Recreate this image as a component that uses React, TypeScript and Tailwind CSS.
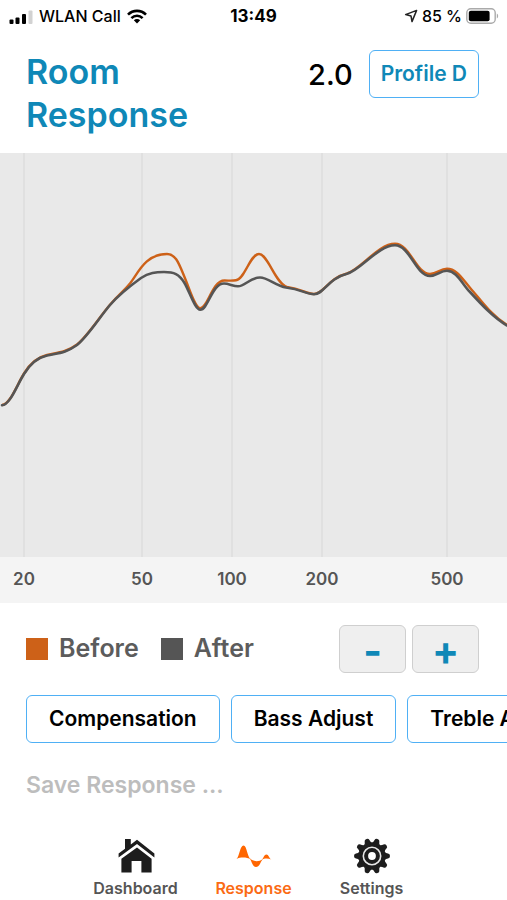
const beforePath =
    "M2 252 C10 251.7 17 231.5 24 220.5 C31 209 38 204 47 202 C58 199.6 66 199.5 77 191.5 C88 182.5 99 164.5 110 151.7 " +
    "C119 141 124 138 130 130.5 C138 120.5 145 101 167 101 C176 101 179 111 184.5 124 C190 137 195 155.3 200.3 155.3 " +
    "C208 155.3 212 127.5 224.5 127.5 C229 127.5 232 128 236 127.2 C245 126 250 101 259 101 C268 101 275 130 287 134 " +
    "C302 136 306 141 314 141 C324 141 328 125.3 347 120.5 C361 116.5 378 90.7 395 90.7 C410 90.7 416 121 430 121 " +
    "C437 121 440 115.8 447 115.8 C457 115.8 463 127 470 134.7 C482 148.5 492 163 507 172";

const afterPath =
    "M2 252.3 C10 252 17 232 24 221 C31 209.5 38 204.5 47 202.5 C58 200 66 200 77 192 C88 183 99 165 110 152 " +
    "C119 141.5 130 133 141 125 C149 119.5 156 119 164 119 C174 119 179 121 184.5 130 C190 139.5 195 156.7 200.3 156.7 " +
    "C208 156.7 212 130.5 224 130.5 C229 130.5 233 133.3 238 133.3 C245 133.3 250 124.5 260 124.5 C268 124.5 276 133 286 134.5 " +
    "C302 136.5 306 141.2 314 141.2 C324 141.2 328 125.5 347 120.8 C361 117 378 92.3 395 92.3 C410 92.3 416 123 430 123 " +
    "C437 123 440 117.8 447 117.8 C457 117.8 462 131 470 139 C482 152 494 165 507 172.5";

const ticks = [
    { x: 24, label: "20" },
    { x: 142, label: "50" },
    { x: 232, label: "100" },
    { x: 322, label: "200" },
    { x: 447, label: "500" },
];

function StatusBar() {
    return (
        <div className="grid h-8 grid-cols-[1fr_auto_1fr] items-center px-2 text-base font-medium text-black">
            <div className="flex items-center gap-1.5">
                <svg width="25" height="15" viewBox="0 0 25 15" aria-hidden="true">
                    <rect x="1.5" y="10.5" width="4" height="4.5" rx="1" />
                    <rect x="7.5" y="8.5" width="4" height="6.5" rx="1" />
                    <rect x="14" y="5" width="4" height="10" rx="1" />
                    <rect x="20.5" y="1.5" width="4" height="13.5" rx="1" fill="#d2d2d2" />
                </svg>
                <span>WLAN Call</span>
                <svg width="20" height="15" viewBox="0 0 20 15" fill="none" stroke="#000" strokeWidth="2.6" aria-hidden="true">
                    <path d="M1 5.6C6 0.6 14 0.6 19 5.6" />
                    <path d="M4.4 9.1C7.6 6 12.4 6 15.6 9.1" />
                    <path d="M10 14.6L6.8 11.3C8.6 9.7 11.4 9.7 13.2 11.3Z" fill="#000" stroke="none" />
                </svg>
            </div>
            <span className="text-[17px] font-bold leading-6">13:49</span>
            <div className="flex items-center justify-end gap-1">
                <svg width="14" height="14" viewBox="0 0 14 14" fill="none" stroke="#222" strokeWidth="1.5" strokeLinejoin="round" aria-hidden="true">
                    <path d="M12.6 1.4L1.6 5.6L7 6.9L8 12.6Z" />
                </svg>
                <span>85 %</span>
                <svg width="33" height="16" viewBox="0 0 33 16" aria-hidden="true">
                    <rect x="0.8" y="0.8" width="28.4" height="14.4" rx="4" fill="none" stroke="#aaa" strokeWidth="1.4" />
                    <rect x="2.8" y="2.8" width="20.8" height="10.4" rx="2" />
                    <path d="M30.8 5.5C32.6 6.3 32.6 9.7 30.8 10.5Z" fill="#aaa" />
                </svg>
            </div>
        </div>
    );
}

function ResponseChart() {
    return (
        <svg viewBox="0 0 507 450" className="block w-full" role="img" aria-label="Room Response">
            <rect width="507" height="404" fill="#e9e9e9" />
            <rect y="404" width="507" height="46" fill="#f4f4f4" />
            {ticks.map((tick) => (
                <g key={tick.label}>
                    <line x1={tick.x} x2={tick.x} y1="0" y2="404" stroke="#e0e0e0" strokeWidth="2" />
                    <text x={tick.x} y="432" textAnchor="middle" className="fill-[#555555] text-[17px] font-semibold">
                        {tick.label}
                    </text>
                </g>
            ))}
            <path d={beforePath} fill="none" stroke="#cd6118" strokeWidth="2.4" />
            <path d={afterPath} fill="none" stroke="#555555" strokeWidth="2.6" strokeLinecap="round" />
        </svg>
    );
}

function HomeIcon() {
    return (
        <svg width="38" height="36" viewBox="0 0 38 36" fill="#1d1d1d" aria-hidden="true">
            <path d="M20 1.8L13.8 6.4V1H8V10.8L1.6 15.6V19.6L20 6L37.4 19.6V15.6Z" />
            <path d="M20 9.4L4.4 20.8V34.4H14.6V23H24.4V34.4H34.6V20.8Z" />
        </svg>
    );
}

function WaveIcon() {
    return (
        <svg width="38" height="36" viewBox="0 0 38 36" fill="#f60" aria-hidden="true">
            <path d="M1.5 21C4.5 18 5 7.4 8.5 7.4C12 7.4 12 18.5 15.8 21.2C11.5 19.2 5.5 19 1.5 21Z" />
            <path d="M14.8 20.6C16.8 23.6 17.5 29 21 29C24.5 29 25 24.5 27.8 21.2C23.8 24 18.5 23.8 14.8 20.6Z" />
            <path d="M26.6 22C28.6 20 29.2 16.4 31.4 16.4C33.8 16.4 33.8 20 36.4 21.6C33 20.2 29.4 20.2 26.6 22Z" />
        </svg>
    );
}

function GearIcon() {
    return (
        <svg width="38" height="36" viewBox="-19 -18 38 36" fill="#1d1d1d" aria-hidden="true">
            <circle r="13.6" />
            {[0, 36, 72, 108, 144, 180, 216, 252, 288, 324].map((angle) => (
                <path key={angle} d="M12.6 -4.2Q13.8 -2.8 16 -2.5Q18 -2.2 18 0Q18 2.2 16 2.5Q13.8 2.8 12.6 4.2Z" transform={`rotate(${angle})`} />
            ))}
            <circle r="8.7" fill="none" stroke="#e8e8e8" strokeWidth="1.6" />
            <circle r="3.9" fill="#fff" />
        </svg>
    );
}

const tabs = [
    { label: "Dashboard", icon: <HomeIcon />, active: false },
    { label: "Response", icon: <WaveIcon />, active: true },
    { label: "Settings", icon: <GearIcon />, active: false },
];

const outlineButton = "h-12 shrink-0 rounded-md border border-[#4fb0f5] bg-white text-[21px] font-semibold";

export default function App() {
    return (
        <div className="min-h-screen overflow-hidden bg-white font-['Inter',sans-serif]">
            <StatusBar />
            <header className="flex items-start justify-between pb-[17px] pl-[26px] pr-7 pt-[18px]">
                <h1 className="w-44 text-[34px] font-semibold leading-[43px] text-[#0f88b7]">Room Response</h1>
                <div className="flex items-center gap-4">
                    <span className="text-[29px] font-medium leading-none text-black">2.0</span>
                    <button type="button" className={`${outlineButton} px-[11px] text-[#0f88b7]`}>
                        Profile D
                    </button>
                </div>
            </header>

            <ResponseChart />

            <section className="flex items-center justify-between pl-[26px] pr-7 pt-[22px]">
                <div className="flex items-center gap-[22px] text-[25px] font-semibold text-[#5c5c5c]">
                    <div className="flex items-center gap-[11px]">
                        <span className="size-[22px] bg-[#cd6118]" />
                        Before
                    </div>
                    <div className="flex items-center gap-[11px]">
                        <span className="size-[22px] bg-[#555555]" />
                        After
                    </div>
                </div>
                <div className="flex gap-1.5">
                    {["-", "+"].map((sign) => (
                        <button
                            key={sign}
                            type="button"
                            className="h-12 w-[67px] rounded-md border border-[#cfcfcf] bg-[#efefef] pt-1 text-[40px] font-bold leading-none text-[#0f88b7]"
                        >
                            {sign}
                        </button>
                    ))}
                </div>
            </section>

            <section className="mt-[22px] flex gap-[11px] overflow-hidden pl-[26px] text-black">
                {["Compensation", "Bass Adjust", "Treble Adjust"].map((name) => (
                    <button key={name} type="button" className={`${outlineButton} px-[22px]`}>
                        {name}
                    </button>
                ))}
            </section>

            <button type="button" disabled className="ml-[26px] mt-6 block text-[23px] font-semibold leading-9 text-[#bdbdbd]">
                Save Response ...
            </button>

            <nav className="mt-[35px] flex justify-center pb-2">
                {tabs.map((tab) => (
                    <a
                        key={tab.label}
                        href="#"
                        className={`flex w-[118px] flex-col items-center gap-0.5 text-base font-semibold ${tab.active ? "text-[#fb6b14]" : "text-[#555555]"}`}
                    >
                        {tab.icon}
                        {tab.label}
                    </a>
                ))}
            </nav>
        </div>
    );
}
